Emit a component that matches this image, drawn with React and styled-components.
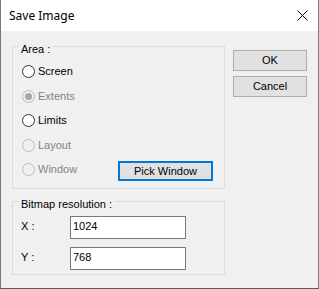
import React from 'react';
import styled, { createGlobalStyle } from 'styled-components';

const Global = createGlobalStyle`
  html, body { margin: 0; padding: 0; background: #ffffff; }
  body { font-family: "Liberation Sans", Arial, sans-serif; font-size: 11px; color: #000; }
`;

const Window = styled.div`
  width: 319px;
  height: 289px;
  box-sizing: border-box;
  border: 1px solid #7a7a7a;
  border-top: none;
  border-bottom-color: #5a5a5a;
  background: #f0f0f0;
  display: flex;
  flex-direction: column;
`;

const TitleBar = styled.div`
  flex: none;
  height: 31px;
  box-sizing: border-box;
  background: #ffffff;
  display: flex;
  align-items: center;
  justify-content: space-between;
  padding: 0 10px 0 8px;
`;

const Title = styled.span`
  font-family: "Noto Sans", "Open Sans", sans-serif;
  font-size: 12px;
  line-height: 16px;
  color: #000;
`;

const CloseIcon = styled.svg`
  width: 11px;
  height: 11px;
  display: block;
`;

const Body = styled.div`
  display: flex;
  align-items: flex-start;
  gap: 8px;
  padding: 15px 0 0 11px;
`;

const LeftColumn = styled.div`
  width: 213px;
  display: flex;
  flex-direction: column;
  gap: 12px;
`;

const GroupBox = styled.div`
  border: 1px solid #dcdcdc;
  display: flex;
  flex-direction: column;
  padding-bottom: ${p => p.$padBottom}px;
`;

const Legend = styled.span`
  align-self: flex-start;
  margin: -4.5px 0 0 6px;
  padding: 0 2px;
  height: 13px;
  line-height: 13px;
  background: #f0f0f0;
  color: #000;
`;

const RadioList = styled.div`
  margin-top: 4px;
  padding-left: 9px;
  display: flex;
  flex-direction: column;
`;

const RadioRow = styled.div`
  height: 24.5px;
  display: flex;
  align-items: center;
`;

const RadioOption = styled.label`
  flex: 0 0 96px;
  display: flex;
  align-items: center;
  gap: 3px;
  line-height: 13px;
  color: ${p => (p.$disabled ? '#838383' : '#000')};
`;

const Circle = styled.span`
  position: relative;
  width: 13px;
  height: 13px;
  box-sizing: border-box;
  border-radius: 50%;
  border: 1px solid ${p => (p.$disabled ? '#bcbcbc' : '#333333')};
  background: ${p => (p.$disabled ? '#f0f0f0' : '#ffffff')};
  &::after {
    content: '';
    display: ${p => (p.$checked ? 'block' : 'none')};
    position: absolute;
    left: 2px;
    top: 2px;
    width: 7px;
    height: 7px;
    border-radius: 50%;
    background: ${p => (p.$disabled ? '#a8a8a8' : '#333333')};
  }
`;

const Button = styled.button`
  box-sizing: border-box;
  width: ${p => p.$w}px;
  height: ${p => p.$h}px;
  margin: 0;
  padding: 0;
  border: ${p => (p.$focused ? '2px solid #0078d7' : '1px solid #adadad')};
  background: #e1e1e1;
  font-family: "Liberation Sans", Arial, sans-serif;
  font-size: 11px;
  line-height: 13px;
  color: #000;
`;

const PickButton = styled(Button)`
  margin-top: 3px;
`;

const ButtonColumn = styled.div`
  margin-top: 4px;
  display: flex;
  flex-direction: column;
  gap: 5px;
`;

const FormGrid = styled.div`
  margin-top: 5.5px;
  padding-left: 8px;
  display: grid;
  grid-template-columns: 49px 116px;
  row-gap: 8px;
  align-items: center;
`;

const FieldLabel = styled.span`
  line-height: 13px;
  padding-bottom: 3px;
`;

const TextInput = styled.input`
  box-sizing: border-box;
  width: 116px;
  height: 23px;
  margin: 0;
  border: 1px solid #7a7a7a;
  background: #ffffff;
  padding: 2.5px 2px 5.5px;
  font-family: "Liberation Sans", Arial, sans-serif;
  font-size: 11px;
  line-height: 13px;
  color: #000;
  outline: none;
`;

const options = [
  { label: 'Screen' },
  { label: 'Extents', disabled: true, checked: true },
  { label: 'Limits' },
  { label: 'Layout', disabled: true },
  { label: 'Window', disabled: true, pick: true },
];

export default function App() {
  return (
    <>
      <Global />
      <Window>
        <TitleBar>
          <Title>Save Image</Title>
          <CloseIcon viewBox="0 0 11 11">
            <path d="M0.5 0.5 L10.5 10.5 M10.5 0.5 L0.5 10.5" stroke="#000" strokeWidth="1" fill="none" />
          </CloseIcon>
        </TitleBar>
        <Body>
          <LeftColumn>
            <GroupBox $padBottom={6}>
              <Legend>Area :</Legend>
              <RadioList>
                {options.map(o => (
                  <RadioRow key={o.label}>
                    <RadioOption $disabled={o.disabled}>
                      <Circle $disabled={o.disabled} $checked={o.checked} />
                      {o.label}
                    </RadioOption>
                    {o.pick && (
                      <PickButton $w={95} $h={20} $focused>
                        Pick Window
                      </PickButton>
                    )}
                  </RadioRow>
                ))}
              </RadioList>
            </GroupBox>
            <GroupBox $padBottom={4}>
              <Legend>Bitmap resolution :</Legend>
              <FormGrid>
                <FieldLabel>X :</FieldLabel>
                <TextInput defaultValue="1024" />
                <FieldLabel>Y :</FieldLabel>
                <TextInput defaultValue="768" />
              </FormGrid>
            </GroupBox>
          </LeftColumn>
          <ButtonColumn>
            <Button $w={74} $h={21}>OK</Button>
            <Button $w={74} $h={21}>Cancel</Button>
          </ButtonColumn>
        </Body>
      </Window>
    </>
  );
}
